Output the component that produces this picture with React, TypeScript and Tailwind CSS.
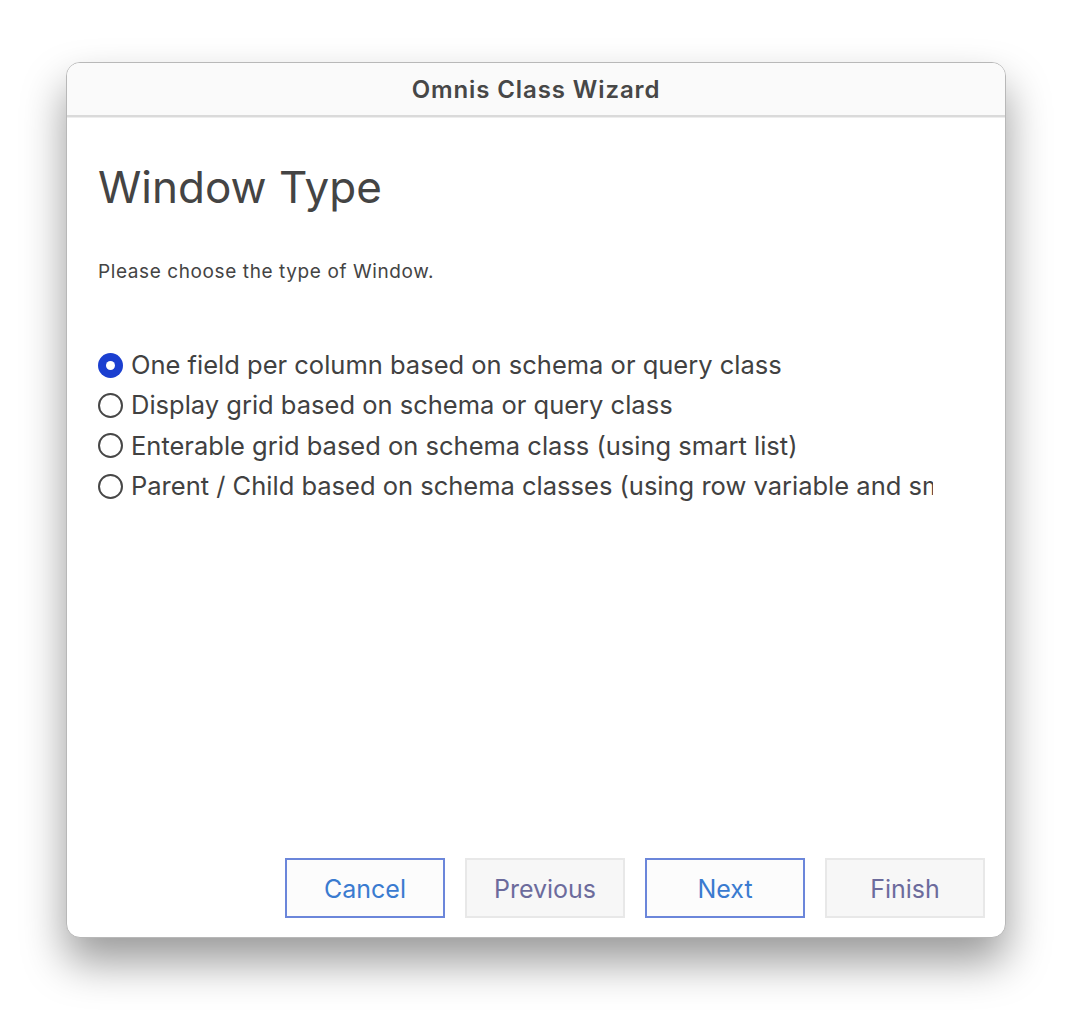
import React from "react";

const options = [
  "One field per column based on schema or query class",
  "Display grid based on schema or query class",
  "Enterable grid based on schema class (using smart list)",
  "Parent / Child based on schema classes (using row variable and smart lists)",
];

function Radio({ checked }: { checked: boolean }) {
  return checked ? (
    <span className="w-[25px] h-[25px] rounded-full bg-[#1b3fd0] flex items-center justify-center shrink-0">
      <span className="w-[9px] h-[9px] rounded-full bg-white" />
    </span>
  ) : (
    <span className="w-[25px] h-[25px] rounded-full border-2 border-[#474747] bg-white shrink-0" />
  );
}

function WizButton({ label, primary }: { label: string; primary?: boolean }) {
  return (
    <button
      className={
        primary
          ? "w-[160px] h-[60px] pt-[4px] border-2 border-[#6b86da] bg-[#fcfcfc] text-[#3a7bd0] text-[25px]"
          : "w-[160px] h-[60px] pt-[4px] border-2 border-[#e8e8e8] bg-[#f7f7f7] text-[#6c6b9c] text-[25px]"
      }
    >
      {label}
    </button>
  );
}

export default function App() {
  return (
    <div className="min-h-[1020px] bg-white pt-[62px] pl-[66px]" style={{ fontFamily: "Inter, 'Noto Sans', sans-serif" }}>
      <div className="w-[940px] h-[876px] bg-white rounded-[14px] border border-[#b8b8b8] overflow-hidden flex flex-col shadow-[0_24px_44px_rgba(0,0,0,0.4)]">
        <div className="h-[54px] pt-[2px] bg-[#fafafa] flex items-center justify-center border-b-2 border-[#dadada] shrink-0">
          <span className="text-[24px] font-semibold text-[#474747] tracking-[0.9px]">Omnis Class Wizard</span>
        </div>
        <div className="h-px bg-[#ededed]" />
        <div className="flex-1 flex flex-col pl-[31px]">
          <h1 className="mt-[41px] text-[44px] leading-[56px] text-[#444444]">Window Type</h1>
          <p className="mt-[45px] text-[19px] leading-[24px] text-[#444444] tracking-[0.6px]">Please choose the type of Window.</p>
          <div className="mt-[61px] w-[835px] overflow-hidden">
            {options.map((o, i) => (
              <div key={o} className="flex items-center gap-[8px] h-[40.3px]">
                <Radio checked={i === 0} />
                <span className="whitespace-nowrap text-[25.5px] text-[#414141]">{o}</span>
              </div>
            ))}
          </div>
          <div className="mt-auto flex justify-end gap-[20px] pr-[20px] pb-[19px]">
            <WizButton label="Cancel" primary />
            <WizButton label="Previous" />
            <WizButton label="Next" primary />
            <WizButton label="Finish" />
          </div>
        </div>
      </div>
    </div>
  );
}
